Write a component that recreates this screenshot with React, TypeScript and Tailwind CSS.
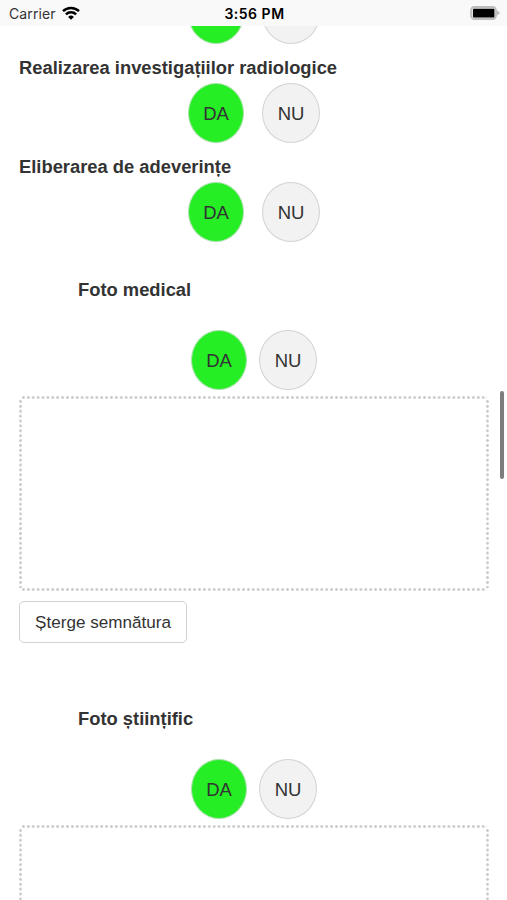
import clsx from "clsx";

const FONT = "font-['Liberation_Sans',Arial,sans-serif]";

const HEADING = "h-[24px] shrink-0 leading-[24px] text-[18.35px] font-bold whitespace-nowrap";

function StatusBar() {
  return (
    <header className="h-[26px] shrink-0 bg-[#f9f9f9] grid grid-cols-3 items-center pl-[9px] pr-[7px] font-['Inter','Liberation_Sans',sans-serif] text-black">
      <div className="flex items-center gap-[6px]">
        <span className="text-[14px] leading-[24px] pt-[2px] tracking-[0.1px] text-[#333]">Carrier</span>
        <svg className="-mt-px" width="18" height="14" viewBox="0 0 18 14" fill="none" stroke="#000" strokeWidth="2.5">
          <path d="M1 5.2a11.4 11.4 0 0 1 16 0" />
          <path d="M3.9 8.4a7.2 7.2 0 0 1 10.2 0" />
          <path d="M9 13.8 6.1 10.9a4.1 4.1 0 0 1 5.8 0z" fill="#000" stroke="none" />
        </svg>
      </div>
      <span className="text-[14px] leading-[24px] pt-[2px] font-semibold text-center tracking-[0.5px] whitespace-nowrap">
        3:56 PM
      </span>
      <svg className="justify-self-end -mt-px" width="30" height="14" viewBox="0 0 30 14">
        <rect x="1" y="1" width="25" height="12" rx="3.4" fill="#e4e4e4" stroke="#bdbdbd" strokeWidth="1.8" />
        <rect x="3" y="2.8" width="21.4" height="8.6" rx="1" fill="#000" />
        <path d="M27 4.4 30 7l-3 2.6z" fill="#b9b9b9" />
      </svg>
    </header>
  );
}

// Bottom edge of the answer that is scrolled under the status bar
function ScrolledChoice() {
  return (
    <div className="h-[18px] shrink-0 overflow-hidden flex items-end justify-center gap-[18px] ml-px">
      <div className="w-[56px] h-[60px] shrink-0 rounded-[50%] bg-[#25ee25] border border-[#a9e0a9]" />
      <div className="w-[58px] h-[60px] shrink-0 rounded-[50%] bg-[#f2f2f2] border border-[#d3d3d3]" />
    </div>
  );
}

function Choice({compact, className}: {compact?: boolean; className?: string}) {
  return (
    <div
      className={clsx(
        "flex justify-center shrink-0 ml-px text-[18.5px] tracking-[-0.2px] text-[#333]",
        compact ? "gap-[12px]" : "gap-[18px]",
        className
      )}
    >
      <button className="w-[56px] h-[60px] pt-px shrink-0 rounded-[50%] bg-[#25ee25] border border-[#a9e0a9]">DA</button>
      <button className="w-[58px] h-[60px] pt-px shrink-0 rounded-[50%] bg-[#f2f2f2] border border-[#d3d3d3]">NU</button>
    </div>
  );
}

// Signature canvas with a dotted outline
function SignaturePad() {
  return (
    <div className="mt-[6px] ml-[19px] w-[470px] h-[195px] shrink-0 flex flex-col">
      <div className="h-[3px] shrink-0 mx-[2px] bg-[radial-gradient(circle,#cacaca_1.1px,transparent_1.6px)] bg-[size:4.9px_3px] bg-repeat-x" />
      <div className="flex-1 flex justify-between">
        <div className="w-[3px] bg-[radial-gradient(circle,#cacaca_1.1px,transparent_1.6px)] bg-[size:3px_4.9px] bg-repeat-y" />
        <div className="w-[3px] bg-[radial-gradient(circle,#cacaca_1.1px,transparent_1.6px)] bg-[size:3px_4.9px] bg-repeat-y" />
      </div>
      <div className="h-[3px] shrink-0 mx-[2px] bg-[radial-gradient(circle,#cacaca_1.1px,transparent_1.6px)] bg-[size:4.9px_3px] bg-repeat-x" />
    </div>
  );
}

export default function App() {
  return (
    <div className={clsx(FONT, "relative w-[507px] h-[900px] overflow-hidden bg-white flex flex-col text-[#333]")}>
      <StatusBar />
      <main className="flex-1 min-h-0 overflow-hidden flex flex-col">
        <ScrolledChoice />
        <h3 className={clsx(HEADING, "mt-[12px] ml-[19px]")}>Realizarea investigațiilor radiologice</h3>
        <Choice className="mt-[3px]" />
        <h3 className={clsx(HEADING, "mt-[12px] ml-[19px]")}>Eliberarea de adeverințe</h3>
        <Choice className="mt-[3px]" />

        <h3 className={clsx(HEADING, "mt-[36px] ml-[78px]")}>Foto medical</h3>
        <Choice compact className="mt-[28px]" />
        <SignaturePad />
        <button className="mt-[10px] ml-[19px] w-[168px] h-[42px] pt-px shrink-0 rounded-[5px] border-[1.5px] border-[#d2d2d2] text-[17.1px] whitespace-nowrap">
          Șterge semnătura
        </button>

        <h3 className={clsx(HEADING, "mt-[64px] ml-[78px]")}>Foto științific</h3>
        <Choice compact className="mt-[28px]" />
        <SignaturePad />
      </main>
      <div className="absolute right-[3.5px] top-[391px] w-[4px] h-[88px] rounded-full bg-[#7d7d7d]" />
    </div>
  );
}
